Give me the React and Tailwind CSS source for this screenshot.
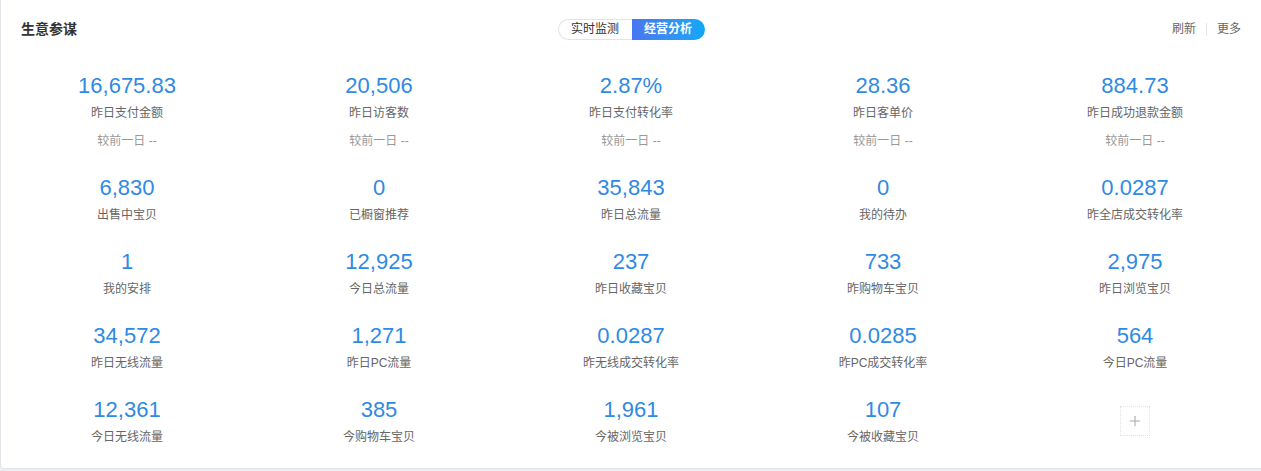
import { Plus } from "lucide-react";

const font = { fontFamily: '"Liberation Sans", "Noto Sans CJK SC", sans-serif' };

const topStats = [
    { value: "16,675.83", label: "昨日支付金额" },
    { value: "20,506", label: "昨日访客数" },
    { value: "2.87%", label: "昨日支付转化率" },
    { value: "28.36", label: "昨日客单价" },
    { value: "884.73", label: "昨日成功退款金额" },
];

const stats = [
    { value: "6,830", label: "出售中宝贝" },
    { value: "0", label: "已橱窗推荐" },
    { value: "35,843", label: "昨日总流量" },
    { value: "0", label: "我的待办" },
    { value: "0.0287", label: "昨全店成交转化率" },
    { value: "1", label: "我的安排" },
    { value: "12,925", label: "今日总流量" },
    { value: "237", label: "昨日收藏宝贝" },
    { value: "733", label: "昨购物车宝贝" },
    { value: "2,975", label: "昨日浏览宝贝" },
    { value: "34,572", label: "昨日无线流量" },
    { value: "1,271", label: "昨日PC流量" },
    { value: "0.0287", label: "昨无线成交转化率" },
    { value: "0.0285", label: "昨PC成交转化率" },
    { value: "564", label: "今日PC流量" },
    { value: "12,361", label: "今日无线流量" },
    { value: "385", label: "今购物车宝贝" },
    { value: "1,961", label: "今被浏览宝贝" },
    { value: "107", label: "今被收藏宝贝" },
];

function StatCell({ value, label, compare }) {
    return (
        <div className="flex flex-col items-center text-center">
            <div className="text-[22px] leading-[26px] text-[#2f8ae4]">{value}</div>
            <div className="text-[12px] leading-[28px] text-[#666]">{label}</div>
            {compare && (
                <div className="text-[12px] leading-[28px] text-[#999]">较前一日 --</div>
            )}
        </div>
    );
}

export default function App() {
    return (
        <div className="h-[471px] w-full bg-[#eceef2]" style={font}>
            <div className="h-[469px] w-full rounded-bl-sm border-b border-l border-[#e4e5ea] bg-white">
                <div className="flex h-[58px] items-center px-5">
                    <div className="flex-1 text-[14px] font-bold text-[#333]">生意参谋</div>
                    <div className="flex h-[21px] items-stretch text-[12px]">
                        <div className="flex w-[74px] items-center justify-center rounded-l-full border border-r-0 border-[#e3e3e3] text-[#333]">
                            实时监测
                        </div>
                        <div className="flex w-[73px] items-center justify-center rounded-r-full bg-gradient-to-r from-[#4676f0] to-[#0aa8f6] font-bold text-white">
                            经营分析
                        </div>
                    </div>
                    <div className="flex flex-1 items-center justify-end text-[12px] text-[#666]">
                        <span>刷新</span>
                        <span className="mx-[10px] h-[13px] w-px bg-[#e5e5e5]" />
                        <span>更多</span>
                    </div>
                </div>

                <div className="grid grid-cols-5 gap-y-5 pt-[15px]">
                    {topStats.map((s, i) => (
                        <StatCell key={i} value={s.value} label={s.label} compare />
                    ))}
                    {stats.map((s, i) => (
                        <StatCell key={i} value={s.value} label={s.label} />
                    ))}
                    <div className="flex justify-center pt-[9px]">
                        <div className="flex h-[30px] w-[30px] items-center justify-center border border-dotted border-[#e2e2e2]">
                            <Plus size={16} strokeWidth={1.6} className="text-[#aaa]" />
                        </div>
                    </div>
                </div>
            </div>
        </div>
    );
}
